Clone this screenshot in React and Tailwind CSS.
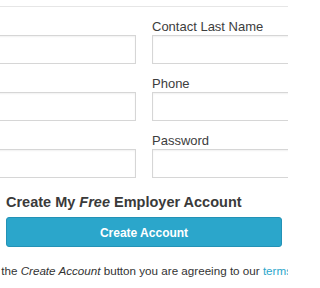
import React from 'react';

const fields = [
  ['Contact First Name', 'Contact Last Name'],
  ['Email', 'Phone'],
  ['Confirm Email', 'Password'],
];

const Field = ({ label, type = 'text' }) => (
  <div className="flex flex-col">
    <label className="text-[13px] leading-4 text-[#3d3d3d]">{label}</label>
    <input
      type={type}
      className="h-[29px] w-full border border-[#d6d6d6] bg-white shadow-[inset_0_1px_2px_rgba(0,0,0,0.06)] outline-none"
    />
  </div>
);

export default function App() {
  return (
    <div className="relative h-[288px] w-[288px] overflow-hidden bg-white font-['Liberation_Sans',Arial,sans-serif] text-[#333]">
      <div className="mt-[6px] border-t border-[#e6e6e6] pt-[12px]">
        {/* left column is wider than the window, only its inputs reach in */}
        <div className="ml-[-164px] grid w-[616px] grid-cols-[300px_300px] gap-x-4 gap-y-3">
          {fields.map(([a, b]) => (
            <React.Fragment key={a}>
              <Field label={a} />
              <Field label={b} type={b === 'Password' ? 'password' : 'text'} />
            </React.Fragment>
          ))}
        </div>

        <div className="mx-[6px] mt-[14px]">
          <h2 className="text-[14.5px] font-bold leading-5 text-[#3a3a3a]">
            Create My <em>Free</em> Employer Account
          </h2>
          <button className="mt-[5px] h-[30px] w-full rounded-[3px] border border-[#2392b6] bg-[#2ba6cb] pt-px text-[12px] font-bold text-white">
            Create Account
          </button>
        </div>

        <p className="ml-[-57px] mt-4 whitespace-nowrap text-[11.65px] leading-4 text-[#333]">
          By clicking the <em>Create Account</em> button you are agreeing to our{' '}
          <a href="#" className="text-[#2ba6cb]">terms of use</a>.
        </p>
      </div>
    </div>
  );
}
